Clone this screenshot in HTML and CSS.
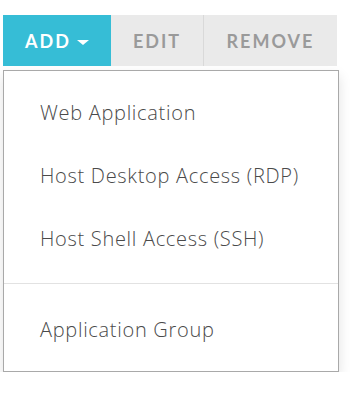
FILE: index.html
```html
<!DOCTYPE html>
<html>
<head>
<meta charset="utf-8">
<link rel="stylesheet" href="styles.css">
</head>
<body>
<div class="wrap">
  <div class="btn-group">
    <button class="btn btn-add">ADD<span class="caret"></span></button>
    <button class="btn btn-edit">EDIT</button>
    <button class="btn btn-remove">REMOVE</button>
  </div>
  <div class="menu">
    <div class="item">Web Application</div>
    <div class="item">Host Desktop Access (RDP)</div>
    <div class="item">Host Shell Access (SSH)</div>
    <div class="divider"></div>
    <div class="item">Application Group</div>
  </div>
</div>
</body>
</html>
```
FILE: styles.css
```css
html, body {
  margin: 0;
  padding: 0;
  background: #ffffff;
}
body {
  font-family: "Open Sans", Lato, sans-serif;
}
.wrap {
  padding: 15px 0 0 3px;
  width: 336px;
}
.btn-group {
  display: flex;
  height: 51px;
}
.btn {
  border: 0;
  margin: 0;
  font-family: Lato, sans-serif;
  font-weight: 700;
  font-size: 18px;
  letter-spacing: 2px;
  display: flex;
  align-items: center;
  justify-content: center;
  padding: 0;
}
.btn-add {
  width: 108px;
  background: #36bdd6;
  color: #ffffff;
}
.caret {
  display: inline-block;
  width: 0;
  height: 0;
  border-left: 6px solid transparent;
  border-right: 6px solid transparent;
  border-top: 5px solid #ffffff;
  margin-left: 6px;
  margin-top: 3px;
}
.btn-edit {
  width: 93px;
  background: #eaeaea;
  color: #9a9a9a;
  border-right: 1px solid #d9d9d9;
}
.btn-remove {
  width: 133px;
  background: #eaeaea;
  color: #9a9a9a;
}
.menu {
  margin-top: 4px;
  width: 334px;
  border: 1px solid #a9a9a9;
  background: #ffffff;
  padding: 10px 0;
  box-shadow: 0 6px 12px rgba(0, 0, 0, 0.12);
}
.item {
  height: 63px;
  display: flex;
  align-items: center;
  padding-left: 36px;
  font-size: 20px;
  font-weight: 300;
  letter-spacing: 0.7px;
  color: #4a4a4a;
}
.divider {
  height: 1px;
  background: #e2e2e2;
  margin: 13px 0 14px;
}
```
